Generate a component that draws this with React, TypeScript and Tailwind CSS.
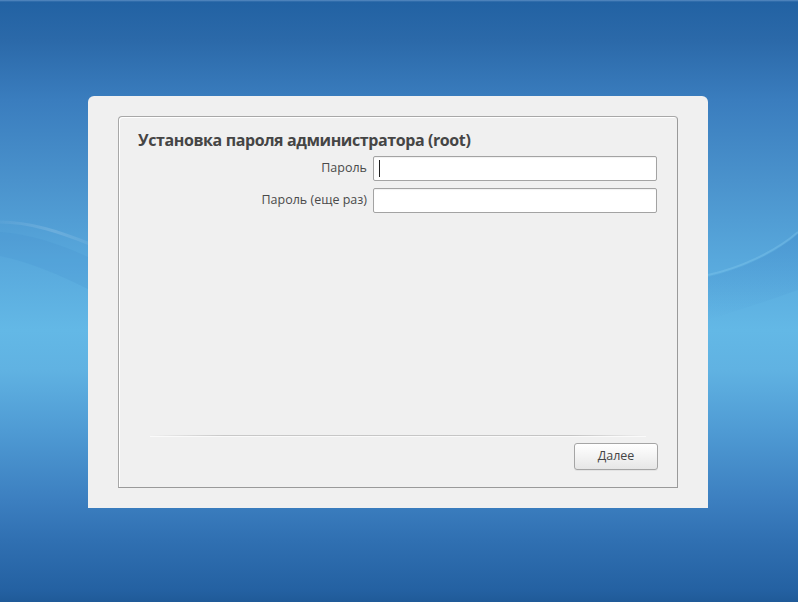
import React from "react";

export default function App() {
  return (
    <div
      className="relative w-[798px] h-[602px] overflow-hidden bg-[linear-gradient(to_bottom,#5a8cc2_0px,#2262a3_2px,#2b69a9_40px,#3a7dbe_100px,#4a92cc_180px,#58a8dc_260px,#63b8e6_330px,#60b2e2_370px,#4f9bd4_430px,#3c7fc0_500px,#3070b2_540px,#2461a2_590px,#1f5a98_602px)]"
      style={{ fontFamily: '"Open Sans", "Noto Sans", "DejaVu Sans", sans-serif' }}
    >
      <svg className="absolute inset-0" width="798" height="602" viewBox="0 0 798 602">
        <defs>
          <linearGradient id="sw1" x1="0" y1="0" x2="1" y2="0">
            <stop offset="0" stopColor="#ffffff" stopOpacity="0.04" />
            <stop offset="0.6" stopColor="#ffffff" stopOpacity="0.14" />
            <stop offset="1" stopColor="#ffffff" stopOpacity="0.06" />
          </linearGradient>
          <linearGradient id="sw2" x1="0" y1="0" x2="0" y2="1">
            <stop offset="0" stopColor="#3d86c8" stopOpacity="0.35" />
            <stop offset="1" stopColor="#3d86c8" stopOpacity="0" />
          </linearGradient>
        </defs>
        <path d="M0 222 C30 222 60 232 90 244" stroke="url(#sw1)" strokeWidth="3" fill="none" />
        <path d="M0 232 C30 234 60 244 90 258 L90 290 C60 275 30 262 0 256 Z" fill="#3f88c8" fillOpacity="0.15" />
        <path d="M708 275 C740 268 775 252 798 232" stroke="#8fcff2" strokeOpacity="0.3" strokeWidth="2" fill="none" />
        <path d="M708 277 C740 270 775 254 798 234 L798 290 C770 300 740 310 708 320 Z" fill="url(#sw2)" />
      </svg>
      <div className="relative pt-[96px] pl-[88px]">
        <div className="w-[620px] h-[412px] bg-[#f0f0f0] rounded-t-[6px] px-[30px] py-[20px]">
          <div className="w-[560px] h-[372px] border border-[#9a9a9a] border-t-[#a8a8a8] border-l-[#a8a8a8] rounded-t-[4px] shadow-[inset_1px_1px_0_#ffffff] flex flex-col pt-[13px] pb-[17px]">
            <div className="pl-[19px] h-[20px] leading-[20px] text-[16px] font-bold text-[#454545] tracking-[-0.4px]">
              Установка пароля администратора (root)
            </div>
            <div className="mt-[6px] flex items-center justify-end pr-[20px] h-[25px]">
              <span className="text-[12.5px] text-[#4a4a4a] mr-[6px]">Пароль</span>
              <div className="relative w-[284px] h-[25px] bg-white border border-[#a3a3a3] rounded-[2px] shadow-[inset_0_1px_1px_rgba(0,0,0,0.06)]">
                <div className="absolute left-[5px] top-[3px] w-[1px] h-[17px] bg-[#222]" />
              </div>
            </div>
            <div className="mt-[7px] flex items-center justify-end pr-[20px] h-[25px]">
              <span className="text-[12.5px] text-[#4a4a4a] mr-[6px]">Пароль (еще раз)</span>
              <div className="w-[284px] h-[25px] bg-white border border-[#a3a3a3] rounded-[2px] shadow-[inset_0_1px_1px_rgba(0,0,0,0.06)]" />
            </div>
            <div className="flex-1" />
            <div className="mx-[31px] h-[1px] bg-[linear-gradient(to_right,rgba(200,200,200,0),#c8c8c8_15%,#c4c4c4_85%,rgba(200,200,200,0))] shadow-[0_1px_0_#fafafa]" />
            <div className="mt-[7px] flex justify-end pr-[19px]">
              <div className="w-[84px] h-[27px] rounded-[3px] border border-[#a5a5a5] bg-[linear-gradient(to_bottom,#ffffff,#f3f3f3_50%,#e6e6e6)] shadow-[0_1px_0_rgba(0,0,0,0.05)] flex items-center justify-center text-[12.5px] text-[#454545]">
                Далее
              </div>
            </div>
          </div>
        </div>
      </div>
    </div>
  );
}
